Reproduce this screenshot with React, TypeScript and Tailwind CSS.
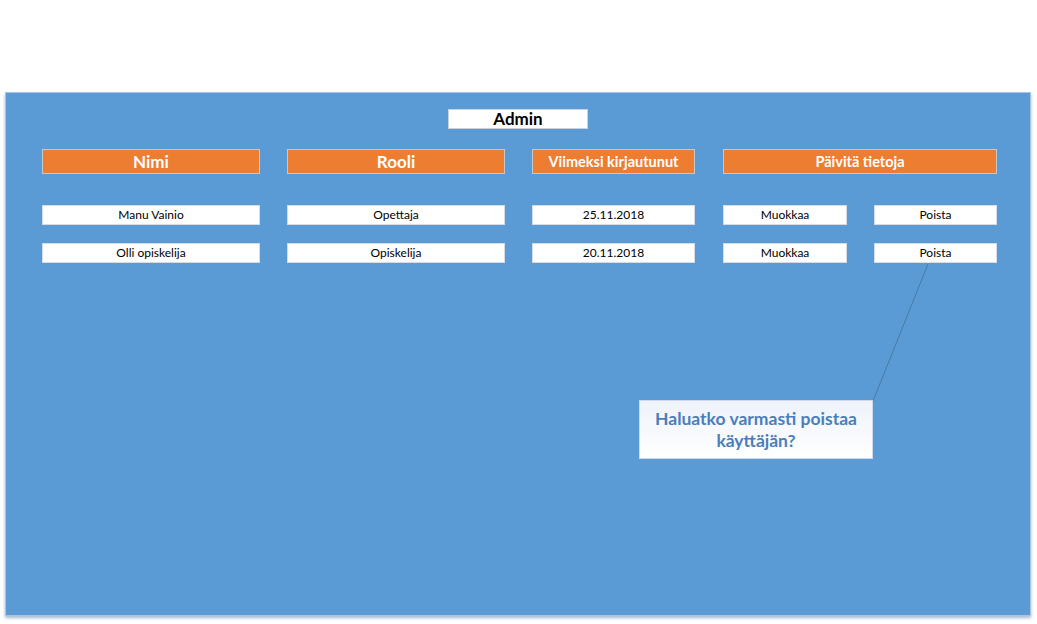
import React from "react";

const users = [
  { name: "Manu Vainio", role: "Opettaja", last: "25.11.2018" },
  { name: "Olli opiskelija", role: "Opiskelija", last: "20.11.2018" },
];

const cell =
  "h-[20px] bg-white border border-[#d6dce5] flex items-center justify-center text-[12px] text-black";

export default function App() {
  return (
    <div className="w-[1037px] h-[624px] bg-white pt-[92px] pl-[5px] font-['Lato','Open_Sans',sans-serif]">
      <div className="relative w-[1026px] h-[524px] bg-[#5b9bd5] border border-[#a9c4e4] shadow-[0_2px_3px_rgba(60,100,150,0.45)] pl-[36px] pt-[16px]">
        {/* Title */}
        <div className="flex">
          <div className="ml-[406px] w-[140px] h-[20px] bg-white border border-[#c9d3df] flex items-center justify-center text-[17px] font-bold text-black">
            Admin
          </div>
        </div>

        {/* Headers */}
        <div className="mt-[20px] flex gap-[27px] text-white font-bold">
          <div className="w-[218px] h-[25px] bg-[#ed7d31] border border-[#c8c8c8] flex items-center justify-center text-[17px]">
            Nimi
          </div>
          <div className="w-[218px] h-[25px] bg-[#ed7d31] border border-[#c8c8c8] flex items-center justify-center text-[17px]">
            Rooli
          </div>
          <div className="w-[163px] h-[25px] bg-[#ed7d31] border border-[#c8c8c8] flex items-center justify-center text-[14.5px]">
            Viimeksi kirjautunut
          </div>
          <div className="ml-[1px] w-[274px] h-[25px] bg-[#ed7d31] border border-[#c8c8c8] flex items-center justify-center text-[14.5px]">
            Päivitä tietoja
          </div>
        </div>

        {/* Rows */}
        <div className="mt-[31px] flex flex-col gap-[18px]">
          {users.map((u) => (
            <div key={u.name} className="flex gap-[27px]">
              <div className={`w-[218px] ${cell}`}>{u.name}</div>
              <div className={`w-[218px] ${cell}`}>{u.role}</div>
              <div className={`w-[163px] ${cell}`}>{u.last}</div>
              <div className="ml-[1px] flex gap-[27px]">
                <div className={`w-[124px] ${cell}`}>Muokkaa</div>
                <div className={`w-[123px] ${cell}`}>Poista</div>
              </div>
            </div>
          ))}
        </div>

        {/* Callout line */}
        <svg className="absolute left-0 top-0" width="1026" height="524">
          <line x1="867" y1="308" x2="922" y2="171" stroke="#41719c" strokeWidth="0.8" />
        </svg>

        {/* Confirm popup */}
        <div className="absolute left-[633px] top-[307px] w-[234px] h-[59px] bg-gradient-to-b from-[#eef3fa] to-white border border-[#d0dae8] flex items-center justify-center text-center text-[17.5px] leading-[22px] font-bold text-[#4a7ebb]">
          Haluatko varmasti poistaa
          <br />
          käyttäjän?
        </div>
      </div>
    </div>
  );
}
